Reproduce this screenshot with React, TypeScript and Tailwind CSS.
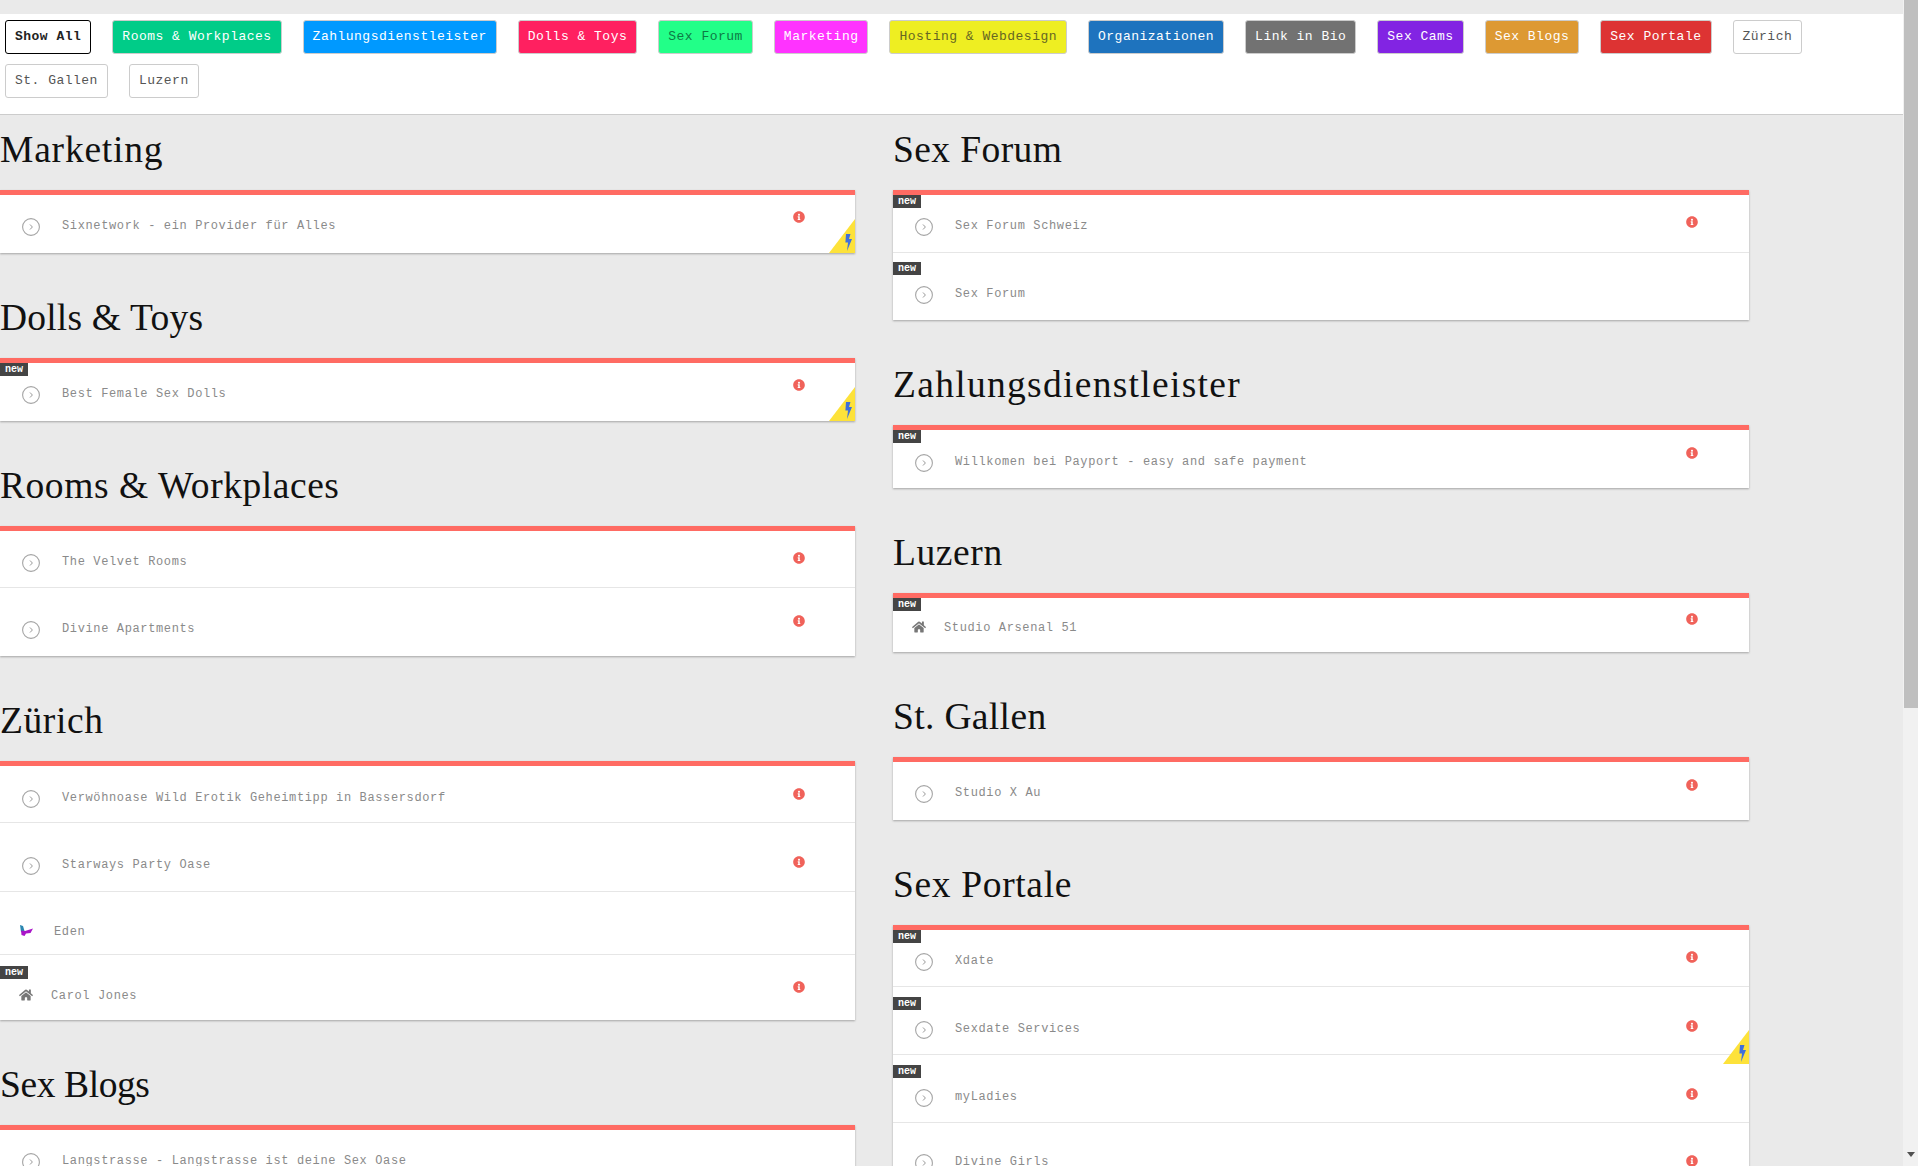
import { FaHome, FaInfoCircle } from "react-icons/fa";

type Row = {
  label: string;
  box: string; // height + top padding
  info?: string; // top offset of the info icon
  tag?: string; // top offset of the "new" tag
  bolt?: string; // bottom offset of the corner flash
  icon?: "home" | "eden";
};

// track: letter spacing per title, the serif here runs narrower than the original
type Section = { title: string; track: string; first?: boolean; rows: Row[] };

const FILTERS = [
  { label: "Show All", tone: "border-black bg-white text-[#222] font-bold" },
  { label: "Rooms & Workplaces", tone: "border-[#ccc] bg-[#00cc88] text-white" },
  { label: "Zahlungsdienstleister", tone: "border-[#ccc] bg-[#0099ff] text-white" },
  { label: "Dolls & Toys", tone: "border-[#ccc] bg-[#ff2060] text-white" },
  { label: "Sex Forum", tone: "border-[#ccc] bg-[#22ff88] text-[#0d7a45]" },
  { label: "Marketing", tone: "border-[#ccc] bg-[#ff33ff] text-white" },
  { label: "Hosting & Webdesign", tone: "border-[#ccc] bg-[#eeee22] text-[#666622]" },
  { label: "Organizationen", tone: "border-[#ccc] bg-[#1e73be] text-white" },
  { label: "Link in Bio", tone: "border-[#ccc] bg-[#727272] text-white" },
  { label: "Sex Cams", tone: "border-[#ccc] bg-[#8224e3] text-white" },
  { label: "Sex Blogs", tone: "border-[#ccc] bg-[#dd9933] text-white" },
  { label: "Sex Portale", tone: "border-[#ccc] bg-[#dd3333] text-white" },
  { label: "Zürich", tone: "border-[#ccc] bg-white text-[#555]" },
  { label: "St. Gallen", tone: "border-[#ccc] bg-white text-[#555]" },
  { label: "Luzern", tone: "border-[#ccc] bg-white text-[#555]" },
];

const LEFT: Section[] = [
  {
    title: "Marketing",
    track: "tracking-[0.8px]",
    first: true,
    rows: [
      { label: "Sixnetwork - ein Provider für Alles", box: "h-[58px] pt-[23px]", info: "top-[16px]", bolt: "bottom-0" },
    ],
  },
  {
    title: "Dolls & Toys",
    track: "tracking-[0.2px]",
    rows: [
      { label: "Best Female Sex Dolls", box: "h-[58px] pt-[23px]", info: "top-[16px]", tag: "top-0", bolt: "bottom-0" },
    ],
  },
  {
    title: "Rooms & Workplaces",
    track: "tracking-[0.55px]",
    rows: [
      { label: "The Velvet Rooms", box: "h-[57px] pt-[23px]", info: "top-[21px]" },
      { label: "Divine Apartments", box: "h-[68px] pt-[33px]", info: "top-[27px]" },
    ],
  },
  {
    title: "Zürich",
    track: "tracking-[0.6px]",
    rows: [
      { label: "Verwöhnoase Wild Erotik Geheimtipp in Bassersdorf", box: "h-[57px] pt-[24px]", info: "top-[22px]" },
      { label: "Starways Party Oase", box: "h-[69px] pt-[34px]", info: "top-[33px]" },
      { label: "Eden", box: "h-[63px] pt-[33px]", icon: "eden" },
      { label: "Carol Jones", box: "h-[65px] pt-[33px]", info: "top-[26px]", tag: "top-[11px]", icon: "home" },
    ],
  },
  {
    title: "Sex Blogs",
    track: "-tracking-[0.4px]",
    rows: [
      { label: "Langstrasse - Langstrasse ist deine Sex Oase", box: "h-[58px] pt-[23px]" },
    ],
  },
];

const RIGHT: Section[] = [
  {
    title: "Sex Forum",
    track: "tracking-[0.4px]",
    first: true,
    rows: [
      { label: "Sex Forum Schweiz", box: "h-[58px] pt-[23px]", info: "top-[21px]", tag: "top-0" },
      { label: "Sex Forum", box: "h-[67px] pt-[33px]", tag: "top-[9px]" },
    ],
  },
  {
    title: "Zahlungsdienstleister",
    track: "tracking-[1.3px]",
    rows: [
      { label: "Willkomen bei Payport - easy and safe payment", box: "h-[58px] pt-[24px]", info: "top-[17px]", tag: "top-0" },
    ],
  },
  {
    title: "Luzern",
    track: "tracking-[0.6px]",
    rows: [
      { label: "Studio Arsenal 51", box: "h-[54px] pt-[22px]", info: "top-[15px]", tag: "top-0", icon: "home" },
    ],
  },
  {
    title: "St. Gallen",
    track: "tracking-[0.35px]",
    rows: [
      { label: "Studio X Au", box: "h-[58px] pt-[23px]", info: "top-[17px]" },
    ],
  },
  {
    title: "Sex Portale",
    track: "tracking-[0.65px]",
    rows: [
      { label: "Xdate", box: "h-[57px] pt-[23px]", info: "top-[21px]", tag: "top-0" },
      { label: "Sexdate Services", box: "h-[68px] pt-[34px]", info: "top-[33px]", tag: "top-[10px]", bolt: "-bottom-[10px]" },
      { label: "myLadies", box: "h-[68px] pt-[34px]", info: "top-[33px]", tag: "top-[10px]" },
      { label: "Divine Girls", box: "h-[68px] pt-[31px]", info: "top-[32px]" },
    ],
  },
];

function ChevronCircle() {
  return (
    <svg width="18" height="18" viewBox="0 0 18 18" fill="none" className="ml-[22px] shrink-0">
      <circle cx="9" cy="9" r="8.4" stroke="#a5a5a5" strokeWidth="1.1" />
      <path d="M8 6.5 10.4 9 8 11.5" stroke="#999" strokeWidth="1" />
    </svg>
  );
}

function EdenLogo() {
  return (
    <svg width="13" height="11" viewBox="0 0 13 11" className="ml-[20px] shrink-0">
      <path d="M0 0 3 1 4.5 6 1 7Z" fill="#2a86b0" />
      <path d="M1 5.5 5 6 13 3.5 10.5 8 6 8.5 4.5 11 1.5 10Z" fill="#a914c8" />
    </svg>
  );
}

function FlashCorner({ offset }: { offset: string }) {
  return (
    <svg width="26" height="34" viewBox="0 0 26 34" className={`absolute right-0 z-10 ${offset}`}>
      <path d="M0 34 26 0V34Z" fill="#fde23a" />
      <path d="M17 15h4.500l-1.500 5h3l-5 12 1-8.500h-2.600Z" fill="#3f6fdc" />
    </svg>
  );
}

function ListRow({ row }: { row: Row }) {
  return (
    <li className={`relative flex items-start border-b border-[#e6e6e6] last:border-b-0 ${row.box}`}>
      {row.tag && (
        <span
          className={`absolute left-0 flex h-[13px] w-[28px] items-center justify-center bg-[#444] text-[10px] font-bold leading-none text-white ${row.tag}`}
        >
          new
        </span>
      )}
      {row.icon === "home" && <FaHome className="ml-[19px] shrink-0 text-[14px] text-[#777]" />}
      {row.icon === "eden" && <EdenLogo />}
      {!row.icon && <ChevronCircle />}
      <span
        className={`text-[12px] leading-[14px] tracking-[0.63px] text-[#8a8a8a] ${
          row.icon === "home" ? "ml-[18px] mt-[1px]" : row.icon === "eden" ? "ml-[21px]" : "ml-[22px] mt-[1px]"
        }`}
      >
        {row.label}
      </span>
      {row.info && <FaInfoCircle className={`absolute left-[793px] text-[12px] text-[#f0625a] ${row.info}`} />}
      {row.bolt && <FlashCorner offset={row.bolt} />}
    </li>
  );
}

function ListSection({ section }: { section: Section }) {
  return (
    <section className={section.first ? "" : "mt-[30px]"}>
      <h2
        className={`h-[75px] font-['Liberation_Serif',serif] text-[37.5px] font-normal leading-[69px] text-[#111] ${section.track}`}
      >
        {section.title}
      </h2>
      <div className="border-t-[5px] border-[#ff6b63] bg-white shadow-[0_1px_2px_rgba(0,0,0,0.3)]">
        <ul>
          {section.rows.map((row) => (
            <ListRow key={row.label} row={row} />
          ))}
        </ul>
      </div>
    </section>
  );
}

function Scrollbar() {
  return (
    <aside className="flex h-full w-[15px] shrink-0 flex-col bg-[#f1f1f1] pl-[1px]">
      <div className="h-[708px] w-[14px] bg-[#bfbfbf]" />
      <div className="mt-auto flex h-[14px] w-[14px] items-start justify-center">
        <svg width="8" height="5" viewBox="0 0 8 5">
          <path d="M0 0h8L4 5Z" fill="#505050" />
        </svg>
      </div>
    </aside>
  );
}

export default function App() {
  return (
    <div className="flex h-screen overflow-hidden bg-[#eaeaea] font-['Liberation_Mono',monospace]">
      <main className="min-w-0 flex-1 overflow-hidden pt-[14px]">
        <nav className="flex h-[101px] flex-wrap content-start gap-x-[21px] gap-y-[10px] border-b border-[#ccc] bg-white pl-[5px] pt-[6px]">
          {FILTERS.map((f) => (
            <button
              key={f.label}
              type="button"
              className={`h-[34px] rounded-[3px] border px-[9px] text-[13px] tracking-[0.49px] ${f.tone}`}
            >
              {f.label}
            </button>
          ))}
        </nav>
        <div className="flex gap-[38px]">
          <div className="w-[855px] shrink-0">
            {LEFT.map((s) => (
              <ListSection key={s.title} section={s} />
            ))}
          </div>
          <div className="w-[856px] shrink-0">
            {RIGHT.map((s) => (
              <ListSection key={s.title} section={s} />
            ))}
          </div>
        </div>
      </main>
      <Scrollbar />
    </div>
  );
}
